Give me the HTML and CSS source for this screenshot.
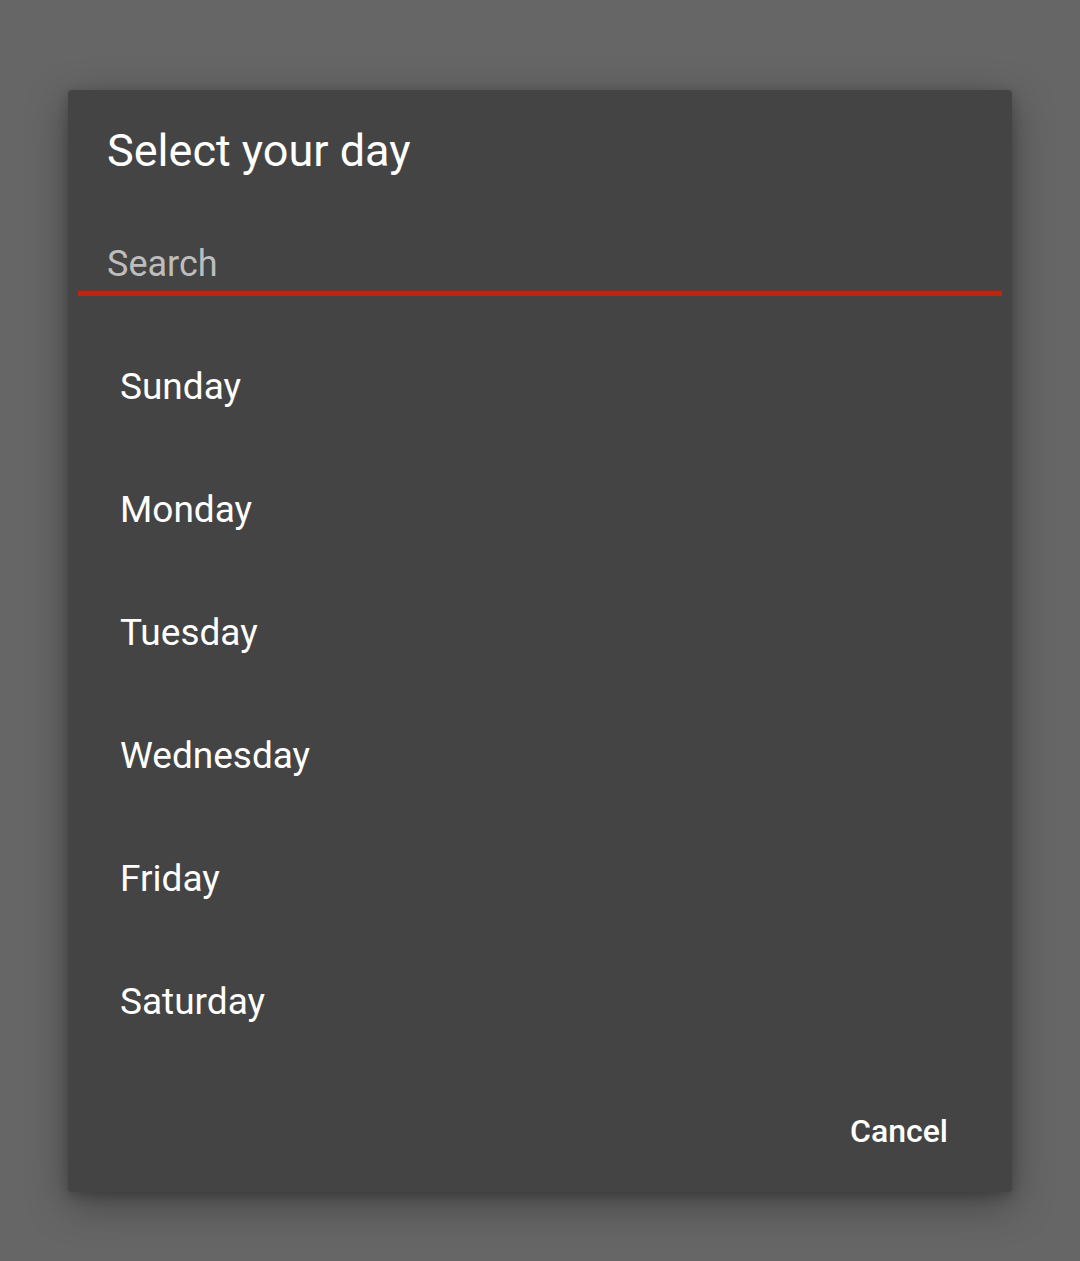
FILE: index.html
```html
<!DOCTYPE html>
<html lang="en">
<head>
<meta charset="utf-8">
<title>Select your day</title>
<link rel="stylesheet" href="styles.css">
</head>
<body>
<div class="backdrop">
  <div class="dialog">
    <h1 class="title">Select your day</h1>
    <div class="search">
      <input class="search-input" type="text" placeholder="Search">
    </div>
    <ul class="list">
      <li class="item">Sunday</li>
      <li class="item">Monday</li>
      <li class="item">Tuesday</li>
      <li class="item">Wednesday</li>
      <li class="item">Friday</li>
      <li class="item">Saturday</li>
    </ul>
    <div class="actions">
      <button class="btn">Cancel</button>
    </div>
  </div>
</div>
</body>
</html>
```

FILE: styles.css
```css
html, body {
  margin: 0;
  padding: 0;
  background: #666666;
  font-family: Roboto, "Liberation Sans", sans-serif;
}
.backdrop {
  width: 1080px;
  height: 1261px;
  box-sizing: border-box;
  padding: 90px 68px 0 68px;
}
.dialog {
  width: 944px;
  height: 1102px;
  box-sizing: border-box;
  background: #444444;
  border-radius: 4px;
  box-shadow: 0 12px 40px rgba(0,0,0,0.35), 0 4px 12px rgba(0,0,0,0.2);
  display: flex;
  flex-direction: column;
}
.title {
  margin: 0;
  padding: 33px 0 0 39px;
  height: 56px;
  font-size: 45px;
  font-weight: 400;
  line-height: 56px;
  color: #ffffff;
}
.search {
  margin: 32px 10px 0 10px;
  border-bottom: 5px solid #c0230e;
}
.search-input {
  display: block;
  width: 100%;
  box-sizing: border-box;
  background: transparent;
  border: 0;
  outline: none;
  padding: 25px 0 0 29px;
  height: 80px;
  line-height: 36px;
  font-family: Roboto, "Liberation Sans", sans-serif;
  font-size: 36px;
  color: #ffffff;
}
.search-input::placeholder {
  color: #bdbdbd;
}
.list {
  list-style: none;
  margin: 29px 0 0 0;
  padding: 0;
}
.item {
  height: 123px;
  line-height: 123px;
  padding-left: 52px;
  font-size: 37px;
  color: #ffffff;
}
.actions {
  margin-top: auto;
  display: flex;
  justify-content: flex-end;
  padding: 0 40px 17px 0;
}
.btn {
  background: transparent;
  border: 0;
  padding: 0 24px;
  height: 88px;
  font-family: Roboto, "Liberation Sans", sans-serif;
  font-size: 32px;
  font-weight: 500;
  color: #ffffff;
}
```
